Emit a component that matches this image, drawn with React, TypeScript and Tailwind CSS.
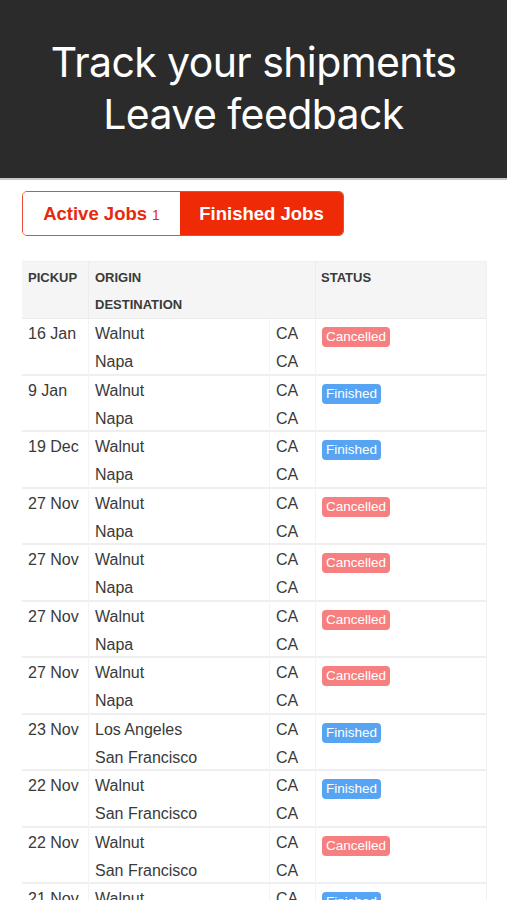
import React from "react";

type Row = { date: string; origin: string; dest: string; status: "Cancelled" | "Finished" };

const rows: Row[] = [
  { date: "16 Jan", origin: "Walnut", dest: "Napa", status: "Cancelled" },
  { date: "9 Jan", origin: "Walnut", dest: "Napa", status: "Finished" },
  { date: "19 Dec", origin: "Walnut", dest: "Napa", status: "Finished" },
  { date: "27 Nov", origin: "Walnut", dest: "Napa", status: "Cancelled" },
  { date: "27 Nov", origin: "Walnut", dest: "Napa", status: "Cancelled" },
  { date: "27 Nov", origin: "Walnut", dest: "Napa", status: "Cancelled" },
  { date: "27 Nov", origin: "Walnut", dest: "Napa", status: "Cancelled" },
  { date: "23 Nov", origin: "Los Angeles", dest: "San Francisco", status: "Finished" },
  { date: "22 Nov", origin: "Walnut", dest: "San Francisco", status: "Finished" },
  { date: "22 Nov", origin: "Walnut", dest: "San Francisco", status: "Cancelled" },
  { date: "21 Nov", origin: "Walnut", dest: "San Francisco", status: "Finished" },
];

export default function App() {
  return (
    <div className="w-[507px] h-[900px] overflow-hidden bg-white" style={{ fontFamily: "'Liberation Sans', Arial, sans-serif" }}>
      <div className="h-[180px] bg-[#2b2b2b] border-b-2 border-[#c8c8c8] flex flex-col items-center justify-center pb-[2px]">
        <div className="text-white text-[41px] leading-[52px] text-center tracking-[-0.6px]" style={{ fontFamily: "Inter, 'Liberation Sans', sans-serif" }}>
          <div>Track your shipments</div>
          <div>Leave feedback</div>
        </div>
      </div>

      <div className="pl-[22px] pt-[11px]">
        <div className="flex w-[322px] h-[45px] rounded-[5px] overflow-hidden border border-[#ec4b3a]">
          <div className="w-[157px] flex items-center justify-center bg-white text-[#e8290b]">
            <span className="text-[18.5px] font-bold">Active Jobs</span>
            <span className="text-[14px] ml-[5px] mt-[3px]">1</span>
          </div>
          <div className="flex-1 flex items-center justify-center bg-[#ee2a07] text-white text-[18.5px] font-bold">
            Finished Jobs
          </div>
        </div>
      </div>

      <div className="ml-[22px] mt-[25px] w-[465px] border-t border-r border-[#f0f0f0] text-[#333]">
        <div className="grid grid-cols-[67px_181px_46px_1fr] bg-[#f5f5f5] text-[13px] font-bold text-[#3a3a3a] border-b border-[#ececec]">
          <div className="pl-[6px] pt-[2px] leading-[27px] border-r border-[#ececec]">PICKUP</div>
          <div className="col-span-2 pl-[6px] pt-[2px] leading-[27px] border-r border-[#ececec]">
            <div>ORIGIN</div>
            <div>DESTINATION</div>
          </div>
          <div className="pl-[5px] pt-[2px] leading-[27px]">STATUS</div>
        </div>
        {rows.map((r, i) => (
          <div key={i} className="grid grid-cols-[67px_181px_46px_1fr] h-[56.5px] border-b-2 border-[#efefef] text-[16px] text-[#3a3a3a]">
            <div className="pl-[6px] pt-[1px] leading-[28px] border-r border-[#f3f3f3]">{r.date}</div>
            <div className="pl-[6px] pt-[1px] leading-[28px] border-r border-[#f3f3f3]">
              <div>{r.origin}</div>
              <div>{r.dest}</div>
            </div>
            <div className="pl-[6px] pt-[1px] leading-[28px] border-r border-[#f3f3f3]">
              <div>CA</div>
              <div>CA</div>
            </div>
            <div className="pl-[6px] pt-[8px] flex items-start">
              <span
                className={
                  r.status === "Cancelled"
                    ? "block h-[20px] leading-[20px] px-[4px] rounded-[4px] bg-[#f77f7f] text-white text-[13.5px]"
                    : "block h-[20px] leading-[20px] px-[4px] rounded-[4px] bg-[#57a5f2] text-white text-[13.5px]"
                }
              >
                {r.status}
              </span>
            </div>
          </div>
        ))}
      </div>
    </div>
  );
}
